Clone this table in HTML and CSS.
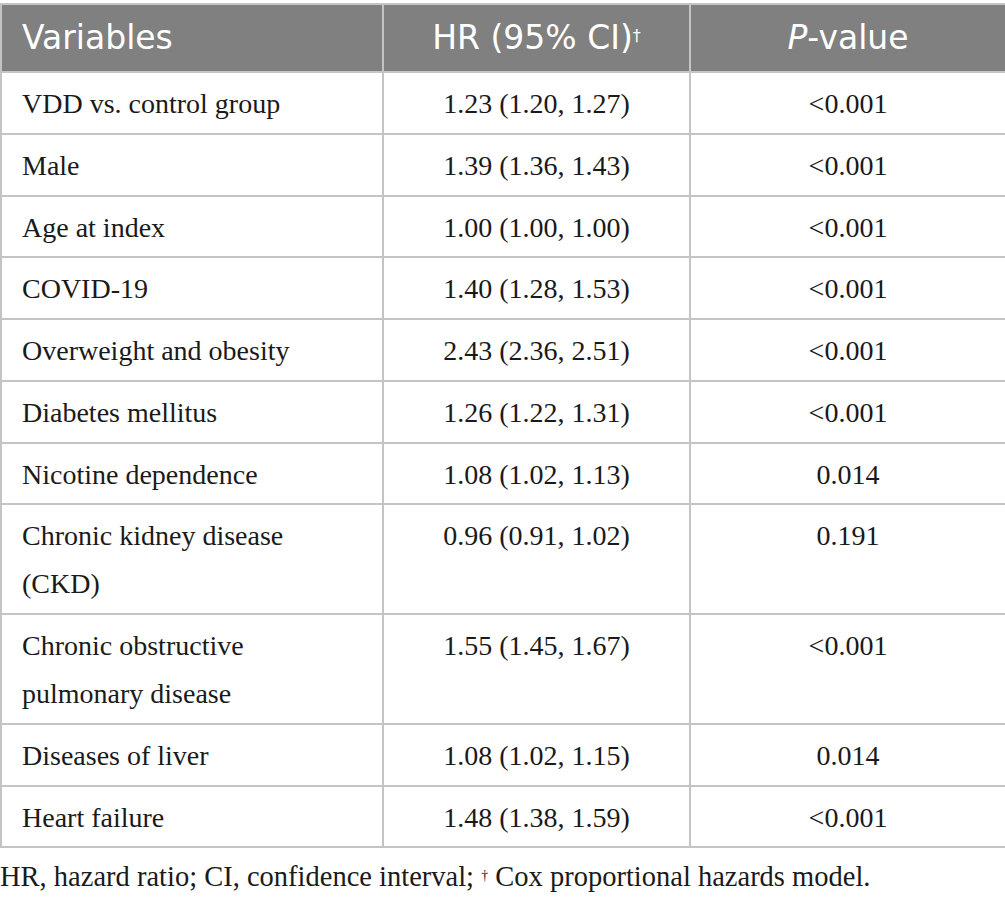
FILE: index.html
```html
<!DOCTYPE html>
<html>
<head>
<meta charset="utf-8">
<link rel="stylesheet" href="styles.css">
</head>
<body>
<div class="wrap">
<table class="tbl">
<colgroup><col class="c1"><col class="c2"><col class="c3"></colgroup>
<thead>
<tr><th class="left">Variables</th><th>HR (95% CI)<sup class="dag">†</sup></th><th><i>P</i>-value</th></tr>
</thead>
<tbody>
<tr><td class="left">VDD vs. control group</td><td>1.23 (1.20, 1.27)</td><td>&lt;0.001</td></tr>
<tr><td class="left">Male</td><td>1.39 (1.36, 1.43)</td><td>&lt;0.001</td></tr>
<tr><td class="left">Age at index</td><td>1.00 (1.00, 1.00)</td><td>&lt;0.001</td></tr>
<tr><td class="left">COVID-19</td><td>1.40 (1.28, 1.53)</td><td>&lt;0.001</td></tr>
<tr><td class="left">Overweight and obesity</td><td>2.43 (2.36, 2.51)</td><td>&lt;0.001</td></tr>
<tr><td class="left">Diabetes mellitus</td><td>1.26 (1.22, 1.31)</td><td>&lt;0.001</td></tr>
<tr><td class="left">Nicotine dependence</td><td>1.08 (1.02, 1.13)</td><td>0.014</td></tr>
<tr><td class="left">Chronic kidney disease (CKD)</td><td>0.96 (0.91, 1.02)</td><td>0.191</td></tr>
<tr><td class="left">Chronic obstructive pulmonary disease</td><td>1.55 (1.45, 1.67)</td><td>&lt;0.001</td></tr>
<tr><td class="left">Diseases of liver</td><td>1.08 (1.02, 1.15)</td><td>0.014</td></tr>
<tr><td class="left">Heart failure</td><td>1.48 (1.38, 1.59)</td><td>&lt;0.001</td></tr>
</tbody>
</table>
<p class="note">HR, hazard ratio; CI, confidence interval; <sup class="fdag">†</sup> Cox proportional hazards model.</p>
</div>
</body>
</html>
```
FILE: styles.css
```css
html, body {
  margin: 0;
  padding: 0;
  background: #fff;
}
.wrap {
  padding-top: 3px;
  width: 1005px;
}
.tbl {
  width: 1005px;
  border-collapse: collapse;
  table-layout: fixed;
}
.c1 { width: 382px; }
.c2 { width: 307px; }
.c3 { width: 316px; }
.tbl th {
  background: #808080;
  color: #fff;
  font-family: "DejaVu Sans", "Open Sans", sans-serif;
  font-weight: 400;
  font-size: 33px;
  height: 68px;
  padding: 0 20px;
  text-align: center;
  border: 2px solid #c4c4c4;
  line-height: 40px;
  box-sizing: border-box;
}
.tbl th.left { text-align: left; }
.dag {
  font-size: 16px;
  vertical-align: top;
  position: relative;
  top: -2px;
}
.tbl td {
  font-family: "Liberation Serif", "Times New Roman", serif;
  font-size: 28px;
  color: #1a1a1a;
  line-height: 48px;
  padding: 7px 20px 4.75px 20px;
  text-align: center;
  vertical-align: top;
  border: 2px solid #c4c4c4;
}
.tbl td.left { text-align: left; }
.note {
  margin: 13px 0 0 0;
  font-family: "Liberation Serif", "Times New Roman", serif;
  font-size: 28.5px;
  line-height: 32px;
  color: #1a1a1a;
}
.fdag {
  font-size: 14px;
  vertical-align: top;
  position: relative;
  top: -1px;
}
```
